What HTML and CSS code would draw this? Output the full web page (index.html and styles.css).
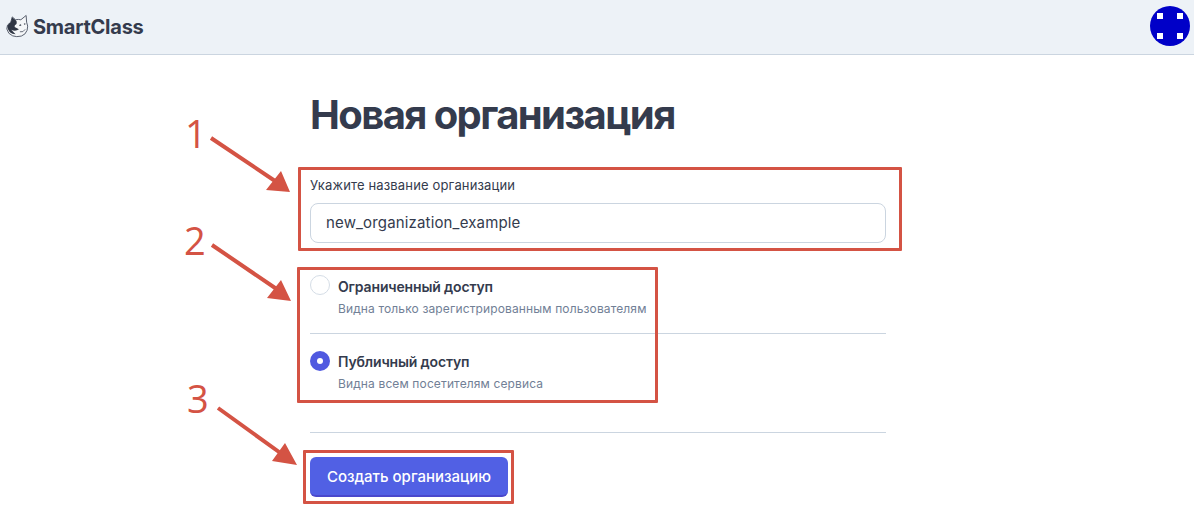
FILE: index.html
```html
<!DOCTYPE html>
<html lang="ru">
<head>
  <meta charset="UTF-8">
  <meta name="viewport" content="width=device-width, initial-scale=1.0">
  <title>SmartClass - Новая организация</title>
  <link rel="stylesheet" href="styles.css">
</head>
<body>

  <header class="topbar">
    <a class="brand" href="#">
      <svg class="brand-logo" viewBox="0 0 24 24" width="23" height="24">
        <path d="M5 8 6.500 2.500 10 5.500 Q13 4.800 15.500 5.500 L21 1 L21.500 8 Q23.500 12 22 16.500 Q20.500 21 16 22.500 Q11 23.800 7 22.300 Q2 20.500 .8 15 Q.3 10.500 5 8Z" fill="#f4f6f8" stroke="#535a68" stroke-width="1"/>
        <path d="M5 8 6.500 3 10 5.800 Q12 7.500 11 10 Q8.500 11 9 13 L13.500 15.500 Q10 18 5.500 16 L10 20.500 Q6.500 20.500 4 18.500 Q1.200 15.500 1.500 12.500 Q2.200 9.500 5 8Z" fill="#2f3644"/>
        <path d="M14 11.500 15.800 10.800M18.800 10.200 20.200 9.600" stroke="#2f3644" stroke-width="1.200" fill="none"/>
        <path d="M14.500 18 Q18 19 20 15.500" stroke="#535a68" stroke-width=".9" fill="none"/>
      </svg>
      <span class="brand-name">SmartClass</span>
    </a>
    <svg class="avatar" viewBox="0 0 40 40" width="40" height="40">
      <circle cx="20" cy="20" r="20" fill="#0000c8"/>
      <rect x="7" y="7" width="6" height="6" fill="#fff"/>
      <rect x="27" y="7" width="6" height="6" fill="#fff"/>
      <rect x="7" y="27" width="6" height="6" fill="#fff"/>
      <rect x="27" y="27" width="6" height="6" fill="#fff"/>
    </svg>
  </header>

  <main class="page">
    <h1 class="title">Новая организация</h1>
    <form class="org-form">
      <div class="field">
        <label class="field-label" for="org-name">Укажите название организации</label>
        <input class="field-input" id="org-name" type="text" value="new_organization_example">
      </div>

      <div class="access-list">
        <label class="access-item">
          <span class="radio"></span>
          <span class="access-text">
            <span class="access-name">Ограниченный доступ</span>
            <span class="access-desc">Видна только зарегистрированным пользователям</span>
          </span>
        </label>
        <label class="access-item">
          <span class="radio checked"></span>
          <span class="access-text">
            <span class="access-name">Публичный доступ</span>
            <span class="access-desc">Видна всем посетителям сервиса</span>
          </span>
        </label>
      </div>

      <div class="actions">
        <button class="button-submit" type="button">Создать организацию</button>
      </div>
    </form>
  </main>

  <!-- пометки поверх скриншота -->
  <div class="note-box note-box-1"></div>
  <div class="note-box note-box-2"></div>
  <div class="note-box note-box-3"></div>
  <span class="note-num note-num-1">1</span>
  <span class="note-num note-num-2">2</span>
  <span class="note-num note-num-3">3</span>
  <svg class="note-arrows" viewBox="0 0 1194 529" width="1194" height="529">
    <path d="M211 138 281 185M212 245 281 292M218 408 286 457" stroke="#d45344" stroke-width="4" fill="none"/>
    <path d="M290 192 266 190 281 171Z M291 301 267 298 281 280Z M297 465 272 461 285 443Z" fill="#d45344"/>
  </svg>

</body>
</html>
```

FILE: styles.css
```css
* {
  box-sizing: border-box;
  margin: 0;
  padding: 0;
  font-family: 'Inter', sans-serif;
}

html, body {
  overflow: hidden;
}

body {
  position: relative;
  height: 529px;
  background-color: #fff;
  color: #343b4d;
}

.topbar {
  display: flex;
  justify-content: space-between;
  align-items: center;
  height: 55px;
  padding: 0 4px 0 6px;
  background-color: #edf2f7;
  border-bottom: 1px solid #cbd5e0;
}

.brand {
  display: flex;
  align-items: center;
  gap: 4px;
  text-decoration: none;
  color: #343b4d;
}

.brand-logo {
  margin-top: -2px;
}

.brand-name {
  font-size: 20px;
  font-weight: 700;
  letter-spacing: -0.25px;
}

.avatar {
  display: block;
  margin-top: -3px;
}

.page {
  width: 576px;
  margin-left: 310px;
  padding-top: 38px;
}

.title {
  font-size: 40px;
  line-height: 44px;
  font-weight: 700;
  letter-spacing: -1.6px;
  color: #343b4d;
}

.org-form {
  margin-top: 40px;
}

.field-label {
  display: block;
  font-size: 13px;
  line-height: 16px;
  font-weight: 400;
  letter-spacing: 0.15px;
  color: #343b4d;
}

.field-input {
  display: block;
  width: 100%;
  height: 40px;
  margin-top: 10px;
  padding: 0 15px 2px;
  border: 1px solid #cbd5e0;
  border-radius: 8px;
  font-size: 15px;
  letter-spacing: 0.16px;
  color: #343b4d;
  background-color: #fff;
}

.access-list {
  margin-top: 22px;
}

.access-item {
  display: flex;
  gap: 8px;
  height: 69px;
  padding-top: 10px;
  border-bottom: 1px solid #cbd5e0;
}

.access-item + .access-item {
  height: 99px;
  padding-top: 16px;
}

.radio {
  flex: none;
  width: 20px;
  height: 20px;
  border: 1px solid #d5dde6;
  border-radius: 50%;
}

.radio.checked {
  display: flex;
  justify-content: center;
  align-items: center;
  margin-top: 1px;
  border: none;
  background-color: #5059e0;
}

.radio.checked::after {
  content: "";
  width: 6px;
  height: 6px;
  border-radius: 50%;
  background-color: #fff;
}

.access-text {
  display: flex;
  flex-direction: column;
  gap: 4px;
  padding-top: 2px;
}

.access-name {
  font-size: 14px;
  line-height: 20px;
  font-weight: 600;
  letter-spacing: -0.15px;
  color: #343b4d;
}

.access-desc {
  font-size: 12px;
  line-height: 16px;
  letter-spacing: 0.13px;
  color: #718096;
}

.actions {
  margin-top: 24px;
}

.button-submit {
  width: 198px;
  height: 40px;
  border: none;
  border-bottom: 2px solid #4a48cc;
  border-radius: 6px;
  background-color: #5160e4;
  color: #fff;
  font-size: 15px;
  font-weight: 500;
}

/* пометки */
.note-box {
  position: absolute;
  border: 3px solid #d45344;
  border-radius: 1px;
}

.note-box-1 {
  left: 298px;
  top: 167px;
  width: 604px;
  height: 84px;
}

.note-box-2 {
  left: 297px;
  top: 267px;
  width: 361px;
  height: 136px;
}

.note-box-3 {
  left: 303px;
  top: 450px;
  width: 211px;
  height: 54px;
}

.note-num {
  position: absolute;
  font-family: 'Open Sans', sans-serif;
  font-size: 38px;
  line-height: 44px;
  color: #d45344;
}

.note-num-1 {
  left: 185px;
  top: 111px;
}

.note-num-2 {
  left: 184px;
  top: 218px;
}

.note-num-3 {
  left: 187px;
  top: 376px;
}

.note-arrows {
  position: absolute;
  left: 0;
  top: 0;
}
```
